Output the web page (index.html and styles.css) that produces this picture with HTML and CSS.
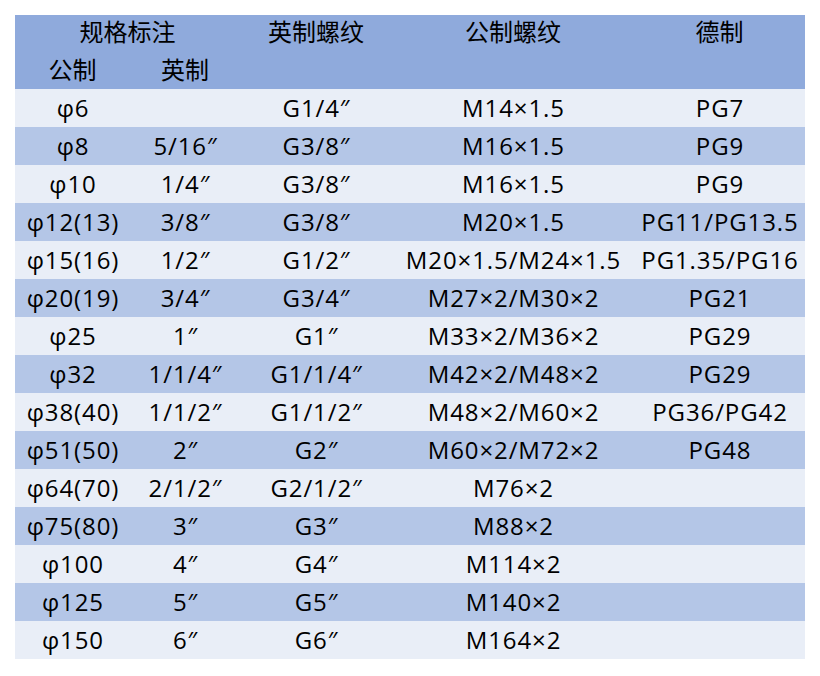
FILE: index.html
```html
<!DOCTYPE html>
<html lang="zh">
<head>
<meta charset="utf-8">
<link rel="stylesheet" href="styles.css">
</head>
<body>
<table class="spec">
  <colgroup>
    <col class="c1"><col class="c2"><col class="c3"><col class="c4"><col class="c5">
  </colgroup>
  <thead>
    <tr class="h1"><th colspan="2">规格标注</th><th>英制螺纹</th><th>公制螺纹</th><th>德制</th></tr>
    <tr class="h2"><th>公制</th><th>英制</th><th></th><th></th><th></th></tr>
  </thead>
  <tbody>
    <tr><td>φ6</td><td></td><td>G1/4″</td><td>M14×1.5</td><td>PG7</td></tr>
    <tr><td>φ8</td><td>5/16″</td><td>G3/8″</td><td>M16×1.5</td><td>PG9</td></tr>
    <tr><td>φ10</td><td>1/4″</td><td>G3/8″</td><td>M16×1.5</td><td>PG9</td></tr>
    <tr><td>φ12(13)</td><td>3/8″</td><td>G3/8″</td><td>M20×1.5</td><td>PG11/PG13.5</td></tr>
    <tr><td>φ15(16)</td><td>1/2″</td><td>G1/2″</td><td>M20×1.5/M24×1.5</td><td>PG1.35/PG16</td></tr>
    <tr><td>φ20(19)</td><td>3/4″</td><td>G3/4″</td><td>M27×2/M30×2</td><td>PG21</td></tr>
    <tr><td>φ25</td><td>1″</td><td>G1″</td><td>M33×2/M36×2</td><td>PG29</td></tr>
    <tr><td>φ32</td><td>1/1/4″</td><td>G1/1/4″</td><td>M42×2/M48×2</td><td>PG29</td></tr>
    <tr><td>φ38(40)</td><td>1/1/2″</td><td>G1/1/2″</td><td>M48×2/M60×2</td><td>PG36/PG42</td></tr>
    <tr><td>φ51(50)</td><td>2″</td><td>G2″</td><td>M60×2/M72×2</td><td>PG48</td></tr>
    <tr><td>φ64(70)</td><td>2/1/2″</td><td>G2/1/2″</td><td>M76×2</td><td></td></tr>
    <tr><td>φ75(80)</td><td>3″</td><td>G3″</td><td>M88×2</td><td></td></tr>
    <tr><td>φ100</td><td>4″</td><td>G4″</td><td>M114×2</td><td></td></tr>
    <tr><td>φ125</td><td>5″</td><td>G5″</td><td>M140×2</td><td></td></tr>
    <tr><td>φ150</td><td>6″</td><td>G6″</td><td>M164×2</td><td></td></tr>
  </tbody>
</table>
</body>
</html>
```
FILE: styles.css
```css
html, body {
  margin: 0;
  padding: 0;
  background: #ffffff;
}
body {
  padding: 15px 15px;
  font-family: "Open Sans", "Noto Sans CJK SC", sans-serif;
  color: #000000;
}
.spec {
  border-collapse: collapse;
  table-layout: fixed;
  width: 790px;
  font-size: 24px;
}
.c1 { width: 115px; }
.c2 { width: 110px; }
.c3 { width: 152px; }
.c4 { width: 242px; }
.c5 { width: 171px; }
.spec th, .spec td {
  padding: 0;
  text-align: center;
  white-space: nowrap;
  font-weight: normal;
  line-height: 1;
}
.spec td {
  letter-spacing: 0.9px;
  padding-left: 1px;
}
.spec th {
  letter-spacing: 0;
}
.spec thead tr {
  background: #8faadc;
  height: 37px;
}
.spec thead .h1 th {
  padding-bottom: 4px;
}
.spec thead .h2 th {
  padding-bottom: 1px;
}
.spec tbody tr {
  height: 38px;
}
.spec tbody tr:nth-child(odd) {
  background: #e9eef7;
}
.spec tbody tr:nth-child(even) {
  background: #b4c6e7;
}
```
